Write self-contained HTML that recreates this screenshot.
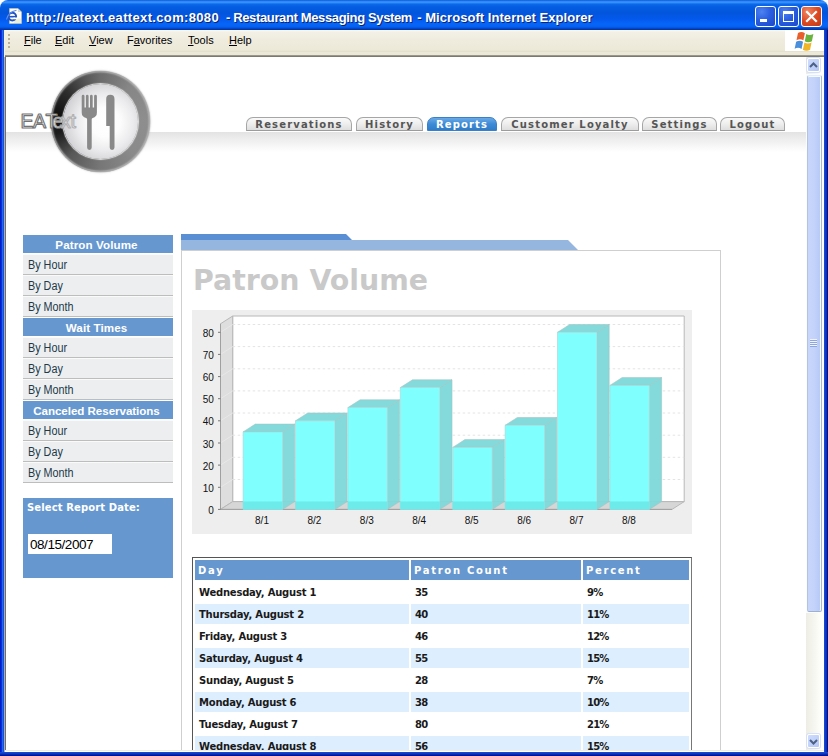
<!DOCTYPE html>
<html>
<head>
<meta charset="utf-8">
<title>Restaurant Messaging System</title>
<style>
html,body{margin:0;padding:0;}
body{width:828px;height:756px;overflow:hidden;position:relative;background:#fff;font-family:"Liberation Sans",sans-serif;}
.abs{position:absolute;}
/* ---- window chrome ---- */
#titlebar{left:0;top:0;width:828px;height:30px;
  background:linear-gradient(to bottom,#0a54cc 0px,#2f86f8 1.2px,#3390ff 2.5px,#0c69e8 4.2px,#045de1 7px,#0255dc 13px,#0459ec 19px,#0666fa 24px,#0560f0 27px,#0343c4 28.6px,#00309c 30px);
  border-radius:8px 8px 0 0;}
#corner-l,#corner-r{top:0;width:8px;height:8px;background:#fff;}
#title{left:26px;top:8.7px;height:18px;line-height:18px;color:#fff;font-family:"Liberation Sans",sans-serif;font-weight:bold;font-size:13px;white-space:nowrap;text-shadow:1px 1px 0 #0a246a;letter-spacing:0.06px;}
.wbtn{top:6px;width:19px;height:19px;border:1px solid #fff;border-radius:3px;
  background:radial-gradient(circle at 30% 25%,#4d82f0 0%,#2a5ee0 45%,#1d47c8 100%);}
#bclose{background:radial-gradient(circle at 30% 25%,#ee8866 0%,#dd4a22 50%,#c03a14 100%);}
#leftb{left:0;top:30px;width:4px;height:726px;background:linear-gradient(to right,#001ccb 0px,#001ccb 1px,#0831d9 1px,#0831d9 2px,#2264ff 2px,#2264ff 3px,#1a54c4 3px,#1a54c4 4px);}
#rightb{left:824px;top:30px;width:4px;height:726px;background:linear-gradient(to right,#1848c4 0px,#1848c4 1px,#0a3ad2 1px,#0a3ad2 2px,#0530c0 2px,#0530c0 3px,#00138c 3px,#00138c 4px);}
#bottomb{left:0;top:752px;width:828px;height:4px;background:linear-gradient(to bottom,#1848c4 0px,#1848c4 1px,#0a3ad2 1px,#0a3ad2 2px,#0428b4 2px,#0428b4 3px,#00138c 3px,#00138c 4px);}
#menubar{left:4px;top:30px;width:820px;height:25px;background:linear-gradient(to bottom,#faf9f4 0px,#f3f1e7 2px,#efecde 10px,#ece9d8 20px,#e4e1cf 21.5px,#ece9d9 22.5px,#ebe8d7 25px);}
#menuline{left:5px;top:55px;width:1px;height:696px;background:#747069;}
#menusep{left:5px;top:55px;width:819px;height:2px;background:linear-gradient(to bottom,#a9a797 0%,#6c6b61 100%);}
.menu{top:32px;height:16px;line-height:16px;font-size:11px;color:#000;font-family:"Liberation Sans",sans-serif;}
.menu u{text-decoration:underline;}
#throb{left:785px;top:30px;width:39px;height:21px;background:#fff;}
#page{left:6px;top:57px;width:800px;height:693px;background:#fff;overflow:hidden;}
/* scrollbar */
#sb{left:806px;top:57px;width:18px;height:693px;background:linear-gradient(to right,#eeede5 0%,#f3f3ec 30%,#fdfdfa 80%,#fff 100%);}

/* ---- page ---- */
#pg{left:-6px;top:-57px;width:828px;height:756px;}
#band{left:5px;top:131.5px;width:801px;height:20px;background:linear-gradient(to bottom,#e3e3e3 0%,#ededed 35%,#f8f8f8 75%,#fff 100%);}
.tab{top:117px;height:12px;border:1px solid #a6a6a6;border-bottom:1px solid #9c9c9c;border-radius:7px 7px 0 0;box-sizing:content-box;
  background:linear-gradient(to bottom,#fafafa 0%,#efefef 45%,#dedede 100%);
  font-family:"DejaVu Sans","Liberation Sans",sans-serif;font-weight:bold;font-size:10px;letter-spacing:1.15px;color:#555;text-align:center;line-height:13.2px;white-space:nowrap;}
.tab.on{background:linear-gradient(to bottom,#6aa9e6 0%,#3d8bd6 50%,#2f7cc8 100%);border-color:#3b7fc4;color:#fff;}
.sh{left:23px;width:147px;padding-right:3px;height:18px;background:#6797cf;color:#fff;font-weight:bold;font-size:11.6px;line-height:20px;text-align:center;letter-spacing:0.1px;overflow:hidden;}
.si{left:23px;width:150px;height:19px;background:#eceeef;border-top:1px solid #fafafa;border-bottom:1px solid #bdbdbd;color:#1c3a4a;font-size:12px;line-height:21.5px;}
.si span{display:inline-block;transform:scaleX(0.9);transform-origin:0 50%;margin-left:5px;white-space:nowrap;}

#datebox{left:23px;top:498px;width:150px;height:80px;background:#6797cf;}
#datelbl{left:27px;top:501px;color:#fff;font-family:"DejaVu Sans","Liberation Sans",sans-serif;font-weight:bold;font-size:10px;line-height:13px;white-space:nowrap;letter-spacing:0.12px;}
#dateinp{left:28px;top:534px;width:84px;height:20px;background:#fff;color:#000;font-size:13.5px;line-height:21px;letter-spacing:-0.45px;text-indent:2px;}
#ph1{left:181px;top:234px;width:171px;height:6px;background:#5b8fd3;clip-path:polygon(0 0,165px 0,171px 6px,0 6px);}
#ph2{left:181px;top:240px;width:397px;height:10px;background:#94b6df;clip-path:polygon(0 0,387px 0,397px 10px,0 10px);}
#panel{left:181px;top:250px;width:538px;height:520px;border:1px solid #cfcfcf;background:#fff;}
#h1{left:193px;top:263.5px;font-family:"DejaVu Sans","Liberation Sans",sans-serif;font-weight:bold;font-size:28.4px;line-height:34px;color:#c9c9c9;white-space:nowrap;}
#chart{left:192px;top:310px;width:500px;height:224px;opacity:0.999;}
#tbl{left:192px;top:557px;width:498px;height:210px;border:1px solid #555;border-right-color:#777;background:#fff;}
.th{height:20px;top:560px;background:#6797cf;color:#fff;font-family:"DejaVu Sans","Liberation Sans",sans-serif;font-weight:bold;font-size:10px;letter-spacing:1.7px;line-height:21px;text-indent:3px;white-space:nowrap;}
.tr{left:195px;width:495px;height:20px;font-family:"DejaVu Sans","Liberation Sans",sans-serif;font-weight:bold;font-size:10px;line-height:22px;color:#1a1a1a;letter-spacing:-0.22px;white-space:nowrap;}
.tr i{font-style:normal;position:absolute;top:0;height:20px;text-indent:4px;}
.tr i.a{left:0;width:214px;}
.tr i.b{left:216px;width:170px;letter-spacing:-0.8px;}
.tr i.c{left:388px;width:106px;letter-spacing:-0.8px;}
.tr.alt i{background:#ddeeff;}

#rim{left:51px;top:71px;width:99px;height:101px;border-radius:50%;
  background:conic-gradient(from 0deg,#6c6c6c 0deg,#868686 40deg,#8e8e8e 90deg,#8a8a8a 135deg,#777777 180deg,#575757 222deg,#1c1c1c 255deg,#111111 280deg,#2e2e2e 312deg,#565656 340deg,#6c6c6c 360deg);
  box-shadow:0 0 1.5px 0.5px rgba(110,110,110,.55), inset 0 0 1.5px 1.5px rgba(190,190,190,.75);}
#plate{left:63px;top:84px;width:75px;height:75px;border-radius:50%;
  background:radial-gradient(circle at 56% 51%,#ffffff 0%,#fdfdfd 26%,#ebebed 50%,#d0d0d4 74%,#b6b6bb 92%,#adadb2 100%);
  box-shadow:0 0 1px 1px rgba(232,232,232,.95);}
#logo{left:15px;top:85px;width:130px;height:75px;opacity:0.999;}
</style>
</head>
<body>
<div id="titlebar" class="abs"></div>
<div id="title" class="abs"><span style="letter-spacing:0.34px">http://eatext.eattext.com:8080</span><span class="abs" style="left:200px;letter-spacing:-0.36px">- Restaurant Messaging System</span><span class="abs" style="left:391.2px;letter-spacing:0.05px">- Microsoft Internet Explorer</span></div>
<div id="bmin" class="abs wbtn" style="left:755px"><svg width="19" height="19" viewBox="0 0 19 19" style="display:block"><rect x="4" y="12" width="7" height="3" fill="#fff"/></svg></div>
<div id="bmax" class="abs wbtn" style="left:778px"><svg width="19" height="19" viewBox="0 0 19 19" style="display:block"><path d="M4,4 H15 V15 H4 Z M5,7 V14 H14 V7 Z" fill="#fff" fill-rule="evenodd"/></svg></div>
<div id="bclose" class="abs wbtn" style="left:801px"><svg width="19" height="19" viewBox="0 0 19 19" style="display:block"><path d="M5,5 L14,14 M14,5 L5,14" stroke="#fff" stroke-width="2.2" stroke-linecap="square" fill="none"/></svg></div>
<div id="menubar" class="abs"></div>
<div id="menuline" class="abs"></div>
<div id="throb" class="abs"></div>
<div id="menusep" class="abs"></div>
<div class="abs menu" style="left:24px"><u>F</u>ile</div>
<div class="abs menu" style="left:55px"><u>E</u>dit</div>
<div class="abs menu" style="left:89px"><u>V</u>iew</div>
<div class="abs menu" style="left:127px">F<u>a</u>vorites</div>
<div class="abs menu" style="left:188px"><u>T</u>ools</div>
<div class="abs menu" style="left:229px"><u>H</u>elp</div>
<svg class="abs" style="left:5px;top:7px" width="18" height="18" viewBox="0 0 18 18">
<path d="M4.5,1.5 H13 L16.5,5 V16.5 H4.5 Z" fill="#fdfdf6" stroke="#c8c8b8" stroke-width="0.6"/>
<path d="M13,1.5 V5 H16.5 Z" fill="#d8d8c8"/>
<path d="M9,11.5 H16 V16 H9 Z" fill="#dfe8d0" opacity=".7"/>
<ellipse cx="7.3" cy="9.6" rx="3.8" ry="3.8" fill="none" stroke="#1f55c8" stroke-width="2"/>
<rect x="4" y="8.9" width="7" height="1.6" fill="#1f55c8"/>
<rect x="8.6" y="10.5" width="4" height="1.8" fill="#fdfdf6"/>
<path d="M1.5,12.5 Q3,5 11.5,3.2" fill="none" stroke="#5f8fe8" stroke-width="1.1"/>
</svg>
<svg class="abs" style="left:792.3px;top:29.8px" width="27.6" height="24.2" viewBox="0 0 24 21">
<path d="M5.2,2.6 Q8.3,0.8 11.2,2.8 L9.9,9 Q7,7.2 3.9,8.9 Z" fill="#e8602c"/>
<path d="M12.4,3.5 Q15.2,5.2 18.6,3.4 L17.3,9.7 Q14,11.4 11.1,9.7 Z" fill="#6ab43e"/>
<path d="M3.6,10.1 Q6.7,8.4 9.6,10.2 L8.3,16.4 Q5.4,14.6 2.3,16.3 Z" fill="#4a8fdc"/>
<path d="M10.8,10.9 Q13.7,12.6 17,10.9 L15.7,17.2 Q12.4,18.9 9.5,17.1 Z" fill="#f0b428"/>
</svg>
<div class="abs" style="left:8px;top:34px;width:2px;height:14px;background:repeating-linear-gradient(to bottom,#b4b09c 0,#b4b09c 2px,transparent 2px,transparent 4px);"></div>
<div id="leftb" class="abs"></div><div class="abs" style="left:4px;top:30px;width:1px;height:27px;background:#f3f1e6"></div><div class="abs" style="left:4px;top:57px;width:1px;height:695px;background:#a3aed6"></div>
<div id="rightb" class="abs"></div>
<div id="page" class="abs">
<div id="pg" class="abs">
<div id="band" class="abs"></div>
<div class="abs tab" style="left:246px;width:104px">Reservations</div>
<div class="abs tab" style="left:356px;width:65px">History</div>
<div class="abs tab on" style="left:427px;width:68px">Reports</div>
<div class="abs tab" style="left:501px;width:136px">Customer Loyalty</div>
<div class="abs tab" style="left:642px;width:73px">Settings</div>
<div class="abs tab" style="left:720px;width:63px">Logout</div>
<div id="rim" class="abs"></div>
<div id="plate" class="abs"></div>
<svg id="logo" class="abs" width="130" height="75" viewBox="15 85 130 75">
<g fill="#898989">
<path d="M81.7,96.2 a1.4,1.4 0 0 1 2.8,0 V107.5 h1.4 V96.2 a1.35,1.35 0 0 1 2.7,0 V107.5 h1.4 V96.2 a1.35,1.35 0 0 1 2.7,0 V107.5 h1.4 V96.2 a1.4,1.4 0 0 1 2.8,0 V112.5 q0,4.5 -4.2,5.4 q-1,0.3 -1,1.6 V147.6 a2.3,2.3 0 0 1 -4.6,0 V119.5 q0,-1.3 -1,-1.6 q-4.4,-0.9 -4.4,-5.4 Z"/>
<path d="M106.2,99 q0,-4.2 4.1,-4.2 q4.2,0 4.2,4.2 V147.6 a2.4,2.4 0 0 1 -4.8,0 V126 h-3.5 Z"/>
</g>
<text y="128.4" font-family="Liberation Sans, sans-serif" font-size="19.6" fill="#ffffff" stroke="#737373" stroke-width="1.15" stroke-linejoin="round"><tspan x="20.6">E</tspan><tspan x="32.9">A</tspan><tspan x="45.6">T</tspan><tspan x="52.4" stroke="#9a9a9a">e</tspan><tspan x="61" stroke="#b0b0b0">x</tspan><tspan x="70.4" stroke="#b0b0b0">t</tspan></text>
</svg>
<div class="abs sh" style="top:235px">Patron Volume</div>
<div class="abs si" style="top:254px"><span>By Hour</span></div>
<div class="abs si" style="top:275px"><span>By Day</span></div>
<div class="abs si" style="top:296px"><span>By Month</span></div>
<div class="abs sh" style="top:318px">Wait Times</div>
<div class="abs si" style="top:337px"><span>By Hour</span></div>
<div class="abs si" style="top:358px"><span>By Day</span></div>
<div class="abs si" style="top:379px"><span>By Month</span></div>
<div class="abs sh" style="top:401px;letter-spacing:-0.05px">Canceled Reservations</div>
<div class="abs si" style="top:420px"><span>By Hour</span></div>
<div class="abs si" style="top:441px"><span>By Day</span></div>
<div class="abs si" style="top:462px"><span>By Month</span></div>
<div id="datebox" class="abs"></div>
<div id="datelbl" class="abs">Select Report Date:</div>
<div id="dateinp" class="abs">08/15/2007</div>
<div id="ph1" class="abs"></div>
<div id="ph2" class="abs"></div>
<div id="panel" class="abs"></div>
<div id="h1" class="abs">Patron Volume</div>
<!--CHART0-->
<svg id="chart" class="abs" width="500" height="224" viewBox="0 0 500 224" font-family="Liberation Sans, sans-serif" font-size="10">
<rect x="0" y="0" width="500" height="224" fill="#eeeeee"/>
<polygon points="40.7,6.0 492.2,6.0 492.2,191.6 40.7,191.6" fill="#ffffff" stroke="#b8b8b8" stroke-width="1"/>
<polygon points="28.5,13.8 40.7,6.0 40.7,191.6 28.5,199.4" fill="#dedede" stroke="#b8b8b8" stroke-width="1"/>
<polygon points="28.5,199.4 40.7,191.6 492.2,191.6 480.0,199.4" fill="#d6d6d6" stroke="#b8b8b8" stroke-width="1"/>
<polyline points="28.5,177.3 40.7,169.5" fill="none" stroke="#e8e8e8" stroke-width="1"/>
<line x1="40.7" y1="169.5" x2="492.2" y2="169.5" stroke="#e4e4e4" stroke-width="1" stroke-dasharray="2.5,2.5"/>
<polyline points="28.5,155.1 40.7,147.3" fill="none" stroke="#e8e8e8" stroke-width="1"/>
<line x1="40.7" y1="147.3" x2="492.2" y2="147.3" stroke="#e4e4e4" stroke-width="1" stroke-dasharray="2.5,2.5"/>
<polyline points="28.5,133.0 40.7,125.2" fill="none" stroke="#e8e8e8" stroke-width="1"/>
<line x1="40.7" y1="125.2" x2="492.2" y2="125.2" stroke="#e4e4e4" stroke-width="1" stroke-dasharray="2.5,2.5"/>
<polyline points="28.5,110.8 40.7,103.0" fill="none" stroke="#e8e8e8" stroke-width="1"/>
<line x1="40.7" y1="103.0" x2="492.2" y2="103.0" stroke="#e4e4e4" stroke-width="1" stroke-dasharray="2.5,2.5"/>
<polyline points="28.5,88.7 40.7,80.9" fill="none" stroke="#e8e8e8" stroke-width="1"/>
<line x1="40.7" y1="80.9" x2="492.2" y2="80.9" stroke="#e4e4e4" stroke-width="1" stroke-dasharray="2.5,2.5"/>
<polyline points="28.5,66.6 40.7,58.8" fill="none" stroke="#e8e8e8" stroke-width="1"/>
<line x1="40.7" y1="58.8" x2="492.2" y2="58.8" stroke="#e4e4e4" stroke-width="1" stroke-dasharray="2.5,2.5"/>
<polyline points="28.5,44.4 40.7,36.6" fill="none" stroke="#e8e8e8" stroke-width="1"/>
<line x1="40.7" y1="36.6" x2="492.2" y2="36.6" stroke="#e4e4e4" stroke-width="1" stroke-dasharray="2.5,2.5"/>
<polyline points="28.5,22.3 40.7,14.5" fill="none" stroke="#e8e8e8" stroke-width="1"/>
<line x1="40.7" y1="14.5" x2="492.2" y2="14.5" stroke="#e4e4e4" stroke-width="1" stroke-dasharray="2.5,2.5"/>
<line x1="28.5" y1="13.8" x2="28.5" y2="199.4" stroke="#a0a0a0" stroke-width="1"/>
<line x1="28.5" y1="199.4" x2="480.0" y2="199.4" stroke="#a0a0a0" stroke-width="1"/>
<line x1="26.0" y1="199.4" x2="28.5" y2="199.4" stroke="#777" stroke-width="1"/>
<text x="21.9" y="203.9" text-anchor="end" fill="#111">0</text>
<line x1="26.0" y1="177.3" x2="28.5" y2="177.3" stroke="#777" stroke-width="1"/>
<text x="21.9" y="181.8" text-anchor="end" fill="#111">10</text>
<line x1="26.0" y1="155.1" x2="28.5" y2="155.1" stroke="#777" stroke-width="1"/>
<text x="21.9" y="159.6" text-anchor="end" fill="#111">20</text>
<line x1="26.0" y1="133.0" x2="28.5" y2="133.0" stroke="#777" stroke-width="1"/>
<text x="21.9" y="137.5" text-anchor="end" fill="#111">30</text>
<line x1="26.0" y1="110.8" x2="28.5" y2="110.8" stroke="#777" stroke-width="1"/>
<text x="21.9" y="115.3" text-anchor="end" fill="#111">40</text>
<line x1="26.0" y1="88.7" x2="28.5" y2="88.7" stroke="#777" stroke-width="1"/>
<text x="21.9" y="93.2" text-anchor="end" fill="#111">50</text>
<line x1="26.0" y1="66.6" x2="28.5" y2="66.6" stroke="#777" stroke-width="1"/>
<text x="21.9" y="71.1" text-anchor="end" fill="#111">60</text>
<line x1="26.0" y1="44.4" x2="28.5" y2="44.4" stroke="#777" stroke-width="1"/>
<text x="21.9" y="48.9" text-anchor="end" fill="#111">70</text>
<line x1="26.0" y1="22.3" x2="28.5" y2="22.3" stroke="#777" stroke-width="1"/>
<text x="21.9" y="26.8" text-anchor="end" fill="#111">80</text>
<polygon points="90.6,121.9 102.8,114.1 102.8,191.6 90.6,199.4" fill="#7fd8d8" fill-opacity="0.96" stroke="#a4c4c4" stroke-width="0.6"/>
<polygon points="51.1,121.9 63.3,114.1 102.8,114.1 90.6,121.9" fill="#7fd8d8" fill-opacity="0.96" stroke="#a4c4c4" stroke-width="0.6"/>
<polygon points="51.1,121.9 90.6,121.9 90.6,199.4 51.1,199.4" fill="#80ffff" stroke="#acd0d0" stroke-width="0.6"/>
<polygon points="51.1,191.6 90.6,191.6 90.6,199.4 51.1,199.4" fill="#6deaea"/>
<text x="70.0" y="213.8" text-anchor="middle" fill="#111" font-size="10">8/1</text>
<polygon points="143.0,110.8 155.2,103.0 155.2,191.6 143.0,199.4" fill="#7fd8d8" fill-opacity="0.96" stroke="#a4c4c4" stroke-width="0.6"/>
<polygon points="103.5,110.8 115.7,103.0 155.2,103.0 143.0,110.8" fill="#7fd8d8" fill-opacity="0.96" stroke="#a4c4c4" stroke-width="0.6"/>
<polygon points="103.5,110.8 143.0,110.8 143.0,199.4 103.5,199.4" fill="#80ffff" stroke="#acd0d0" stroke-width="0.6"/>
<polygon points="103.5,191.6 143.0,191.6 143.0,199.4 103.5,199.4" fill="#6deaea"/>
<text x="122.4" y="213.8" text-anchor="middle" fill="#111" font-size="10">8/2</text>
<polygon points="195.4,97.6 207.6,89.8 207.6,191.6 195.4,199.4" fill="#7fd8d8" fill-opacity="0.96" stroke="#a4c4c4" stroke-width="0.6"/>
<polygon points="155.9,97.6 168.1,89.8 207.6,89.8 195.4,97.6" fill="#7fd8d8" fill-opacity="0.96" stroke="#a4c4c4" stroke-width="0.6"/>
<polygon points="155.9,97.6 195.4,97.6 195.4,199.4 155.9,199.4" fill="#80ffff" stroke="#acd0d0" stroke-width="0.6"/>
<polygon points="155.9,191.6 195.4,191.6 195.4,199.4 155.9,199.4" fill="#6deaea"/>
<text x="174.8" y="213.8" text-anchor="middle" fill="#111" font-size="10">8/3</text>
<polygon points="247.8,77.6 260.0,69.8 260.0,191.6 247.8,199.4" fill="#7fd8d8" fill-opacity="0.96" stroke="#a4c4c4" stroke-width="0.6"/>
<polygon points="208.3,77.6 220.5,69.8 260.0,69.8 247.8,77.6" fill="#7fd8d8" fill-opacity="0.96" stroke="#a4c4c4" stroke-width="0.6"/>
<polygon points="208.3,77.6 247.8,77.6 247.8,199.4 208.3,199.4" fill="#80ffff" stroke="#acd0d0" stroke-width="0.6"/>
<polygon points="208.3,191.6 247.8,191.6 247.8,199.4 208.3,199.4" fill="#6deaea"/>
<text x="227.2" y="213.8" text-anchor="middle" fill="#111" font-size="10">8/4</text>
<polygon points="300.2,137.4 312.4,129.6 312.4,191.6 300.2,199.4" fill="#7fd8d8" fill-opacity="0.96" stroke="#a4c4c4" stroke-width="0.6"/>
<polygon points="260.7,137.4 272.9,129.6 312.4,129.6 300.2,137.4" fill="#7fd8d8" fill-opacity="0.96" stroke="#a4c4c4" stroke-width="0.6"/>
<polygon points="260.7,137.4 300.2,137.4 300.2,199.4 260.7,199.4" fill="#80ffff" stroke="#acd0d0" stroke-width="0.6"/>
<polygon points="260.7,191.6 300.2,191.6 300.2,199.4 260.7,199.4" fill="#6deaea"/>
<text x="279.7" y="213.8" text-anchor="middle" fill="#111" font-size="10">8/5</text>
<polygon points="352.6,115.3 364.8,107.5 364.8,191.6 352.6,199.4" fill="#7fd8d8" fill-opacity="0.96" stroke="#a4c4c4" stroke-width="0.6"/>
<polygon points="313.1,115.3 325.3,107.5 364.8,107.5 352.6,115.3" fill="#7fd8d8" fill-opacity="0.96" stroke="#a4c4c4" stroke-width="0.6"/>
<polygon points="313.1,115.3 352.6,115.3 352.6,199.4 313.1,199.4" fill="#80ffff" stroke="#acd0d0" stroke-width="0.6"/>
<polygon points="313.1,191.6 352.6,191.6 352.6,199.4 313.1,199.4" fill="#6deaea"/>
<text x="332.1" y="213.8" text-anchor="middle" fill="#111" font-size="10">8/6</text>
<polygon points="405.0,22.3 417.2,14.5 417.2,191.6 405.0,199.4" fill="#7fd8d8" fill-opacity="0.96" stroke="#a4c4c4" stroke-width="0.6"/>
<polygon points="365.5,22.3 377.7,14.5 417.2,14.5 405.0,22.3" fill="#7fd8d8" fill-opacity="0.96" stroke="#a4c4c4" stroke-width="0.6"/>
<polygon points="365.5,22.3 405.0,22.3 405.0,199.4 365.5,199.4" fill="#80ffff" stroke="#acd0d0" stroke-width="0.6"/>
<polygon points="365.5,191.6 405.0,191.6 405.0,199.4 365.5,199.4" fill="#6deaea"/>
<text x="384.5" y="213.8" text-anchor="middle" fill="#111" font-size="10">8/7</text>
<polygon points="457.4,75.4 469.6,67.6 469.6,191.6 457.4,199.4" fill="#7fd8d8" fill-opacity="0.96" stroke="#a4c4c4" stroke-width="0.6"/>
<polygon points="417.9,75.4 430.1,67.6 469.6,67.6 457.4,75.4" fill="#7fd8d8" fill-opacity="0.96" stroke="#a4c4c4" stroke-width="0.6"/>
<polygon points="417.9,75.4 457.4,75.4 457.4,199.4 417.9,199.4" fill="#80ffff" stroke="#acd0d0" stroke-width="0.6"/>
<polygon points="417.9,191.6 457.4,191.6 457.4,199.4 417.9,199.4" fill="#6deaea"/>
<text x="436.9" y="213.8" text-anchor="middle" fill="#111" font-size="10">8/8</text>
</svg>
<!--CHART1-->
<div id="tbl" class="abs"></div>
<div class="abs th" style="left:195px;width:214px">Day</div>
<div class="abs th" style="left:411px;width:170px">Patron Count</div>
<div class="abs th" style="left:583px;width:106px">Percent</div>
<div class="abs tr" style="top:582px"><i class="a">Wednesday, August 1</i><i class="b">35</i><i class="c">9%</i></div>
<div class="abs tr alt" style="top:604px"><i class="a">Thursday, August 2</i><i class="b">40</i><i class="c">11%</i></div>
<div class="abs tr" style="top:626px"><i class="a">Friday, August 3</i><i class="b">46</i><i class="c">12%</i></div>
<div class="abs tr alt" style="top:648px"><i class="a">Saturday, August 4</i><i class="b">55</i><i class="c">15%</i></div>
<div class="abs tr" style="top:670px"><i class="a">Sunday, August 5</i><i class="b">28</i><i class="c">7%</i></div>
<div class="abs tr alt" style="top:692px"><i class="a">Monday, August 6</i><i class="b">38</i><i class="c">10%</i></div>
<div class="abs tr" style="top:714px"><i class="a">Tuesday, August 7</i><i class="b">80</i><i class="c">21%</i></div>
<div class="abs tr alt" style="top:736px"><i class="a">Wednesday, August 8</i><i class="b">56</i><i class="c">15%</i></div>

</div>
</div>
<div id="sb" class="abs">
<div class="abs" style="left:1px;top:1px;width:11px;height:12px;border:1px solid #fff;border-radius:2px;background:linear-gradient(135deg,#cfdcfd 0%,#c1d2fa 50%,#b3c7f5 100%);box-shadow:0 0 0 1px #d6e0f7;"></div>
<svg class="abs" style="left:0px;top:0.5px" width="15" height="15" viewBox="0 0 15 15"><path d="M4,9 L7.5,5.5 L11,9" fill="none" stroke="#4d6185" stroke-width="2"/></svg>
<div class="abs" style="left:0px;top:17px;width:18px;height:539px;background:#fbfdfc;"></div><div class="abs" style="left:1px;top:18px;width:13px;height:535px;border:1px solid #b4c4dc;border-right-color:#a9b9cc;border-top-color:#e4ecfa;border-bottom-color:#9fb0cc;border-radius:2px;background:linear-gradient(to right,#c9d6fc 0%,#c4d3fb 45%,#b5c8f4 100%);box-shadow:inset -1px 0 0 #f2fbff, inset 0 1px 0 #f2fbff;"></div>
<div class="abs" style="left:3.5px;top:282px;width:7px;height:8px;background:repeating-linear-gradient(to bottom,#eef3ff 0,#eef3ff 1px,#8fa6dd 1px,#8fa6dd 2px);"></div>
<div class="abs" style="left:1px;top:677px;width:11px;height:12px;border:1px solid #fff;border-radius:2px;background:linear-gradient(135deg,#cfdcfd 0%,#c1d2fa 50%,#b3c7f5 100%);box-shadow:0 0 0 1px #d6e0f7;"></div>
<svg class="abs" style="left:0px;top:677px" width="15" height="15" viewBox="0 0 15 15"><path d="M4,6 L7.5,9.5 L11,6" fill="none" stroke="#4d6185" stroke-width="2"/></svg>

</div>
<div class="abs" style="left:5px;top:750px;width:819px;height:2px;background:linear-gradient(to bottom,#efede3 0px,#efede3 1px,#ffffff 1px,#ffffff 2px)"></div>
<div id="bottomb" class="abs"></div>
</body>
</html>
